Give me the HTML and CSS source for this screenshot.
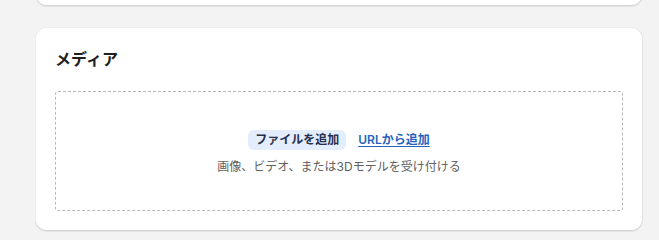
FILE: index.html
```html
<!DOCTYPE html>
<html lang="ja">
<head>
<meta charset="utf-8">
<link rel="stylesheet" href="styles.css">
</head>
<body>
<div class="page">
  <div class="card card-top"></div>
  <section class="card">
    <h2 class="title">メディア</h2>
    <div class="dropzone">
      <div class="actions">
        <button class="btn-add">ファイルを追加</button>
        <a class="link-url" href="#">URLから追加</a>
      </div>
      <p class="hint">画像、ビデオ、または3Dモデルを受け付ける</p>
    </div>
  </section>
</div>
</body>
</html>
```
FILE: styles.css
```css
* { box-sizing: border-box; }
html, body { margin: 0; padding: 0; }
body {
  background: #f3f3f3;
  font-family: Inter, "Noto Sans CJK JP", sans-serif;
  color: #303030;
}
.page {
  width: 659px;
  height: 240px;
  overflow: hidden;
  padding: 0 16px 0 35px;
  display: flex;
  flex-direction: column;
  gap: 21px;
}
.card {
  width: 608px;
  background: #ffffff;
  border-radius: 12px;
  box-shadow: 0 1px 0 rgba(26,26,26,0.07), inset 0 -1px 0 #d4d4d4, inset 1px 0 0 #ececec, inset -1px 0 0 #e4e4e4, inset 0 1px 0 #efefef;
  padding: 20px;
}
.card-top {
  height: 26px;
  margin-top: -20px;
  padding: 0;
}
.title {
  margin: 0;
  font-size: 16px;
  line-height: 24px;
  font-weight: 700;
  color: #1f1f1f;
}
.dropzone {
  margin-top: 20px;
  height: 120px;
  border: 1px dashed #b8b8b8;
  border-radius: 3px;
  display: flex;
  flex-direction: column;
  align-items: center;
  justify-content: center;
  padding-top: 2px;
}
.actions {
  display: flex;
  align-items: center;
  gap: 12px;
}
.btn-add {
  font-family: inherit;
  font-size: 12px;
  font-weight: 600;
  line-height: 20px;
  height: 20px;
  padding: 0 7px;
  border: none;
  border-radius: 6px;
  background: #e3edfc;
  color: #27304d;
  cursor: pointer;
}
.link-url {
  font-size: 12px;
  font-weight: 600;
  line-height: 20px;
  color: #2463bc;
  text-decoration: underline;
  text-underline-offset: 2px;
}
.hint {
  margin: 9px 0 0;
  font-size: 12px;
  line-height: 16px;
  color: #616161;
}
```
